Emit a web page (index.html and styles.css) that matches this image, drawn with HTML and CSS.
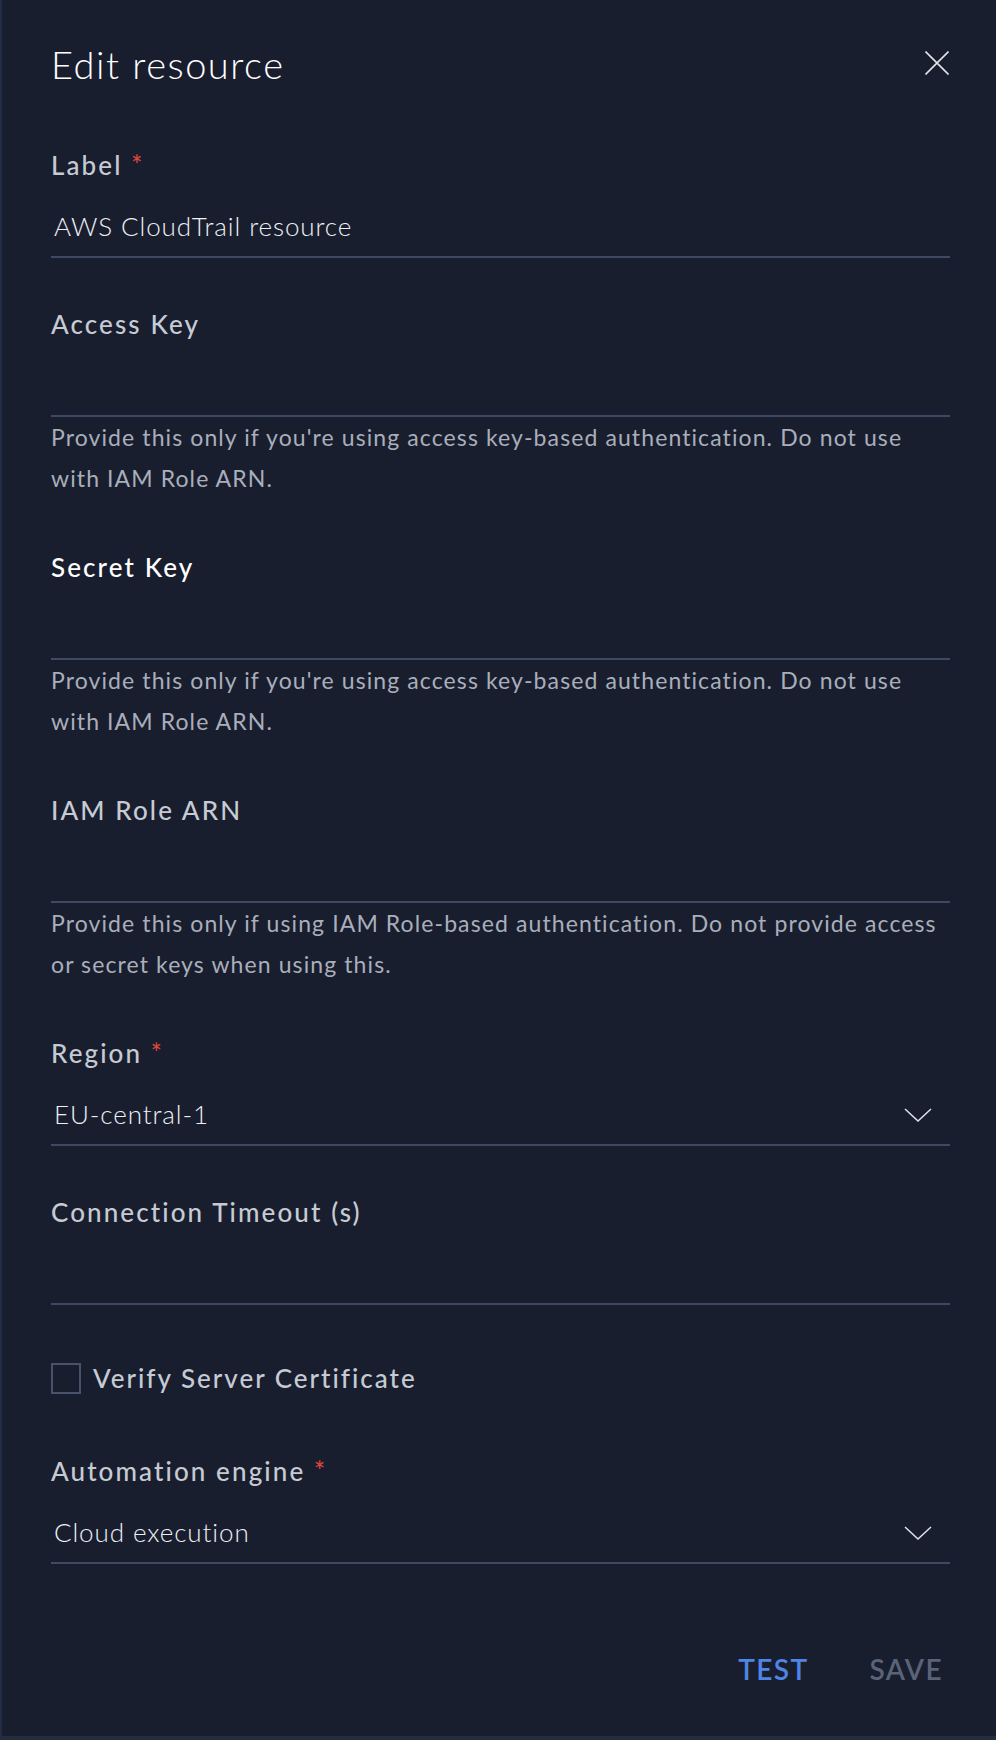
FILE: index.html
```html
<!DOCTYPE html>
<html lang="en">
<head>
<meta charset="utf-8">
<title>Edit resource</title>
<link rel="stylesheet" href="styles.css">
</head>
<body>
<div class="panel">
  <div class="header">
    <h1 class="title">Edit resource</h1>
    <button class="close" aria-label="Close">
      <svg width="24" height="24" viewBox="0 0 24 24"><path d="M0.5 0.5 L23.5 23.5 M23.5 0.5 L0.5 23.5" stroke="#dfe3ea" stroke-width="1.6" fill="none"/></svg>
    </button>
  </div>

  <div class="field first">
    <div class="label">Label <span class="req">*</span></div>
    <div class="input"><span class="value">AWS CloudTrail resource</span></div>
  </div>

  <div class="field">
    <div class="label">Access Key</div>
    <div class="input"></div>
    <div class="help">Provide this only if you're using access key-based authentication. Do not use with IAM Role ARN.</div>
  </div>

  <div class="field">
    <div class="label active">Secret Key</div>
    <div class="input"></div>
    <div class="help">Provide this only if you're using access key-based authentication. Do not use with IAM Role ARN.</div>
  </div>

  <div class="field">
    <div class="label">IAM Role ARN</div>
    <div class="input"></div>
    <div class="help">Provide this only if using IAM Role-based authentication. Do not provide access or secret keys when using this.</div>
  </div>

  <div class="field">
    <div class="label">Region <span class="req">*</span></div>
    <div class="input select"><span class="value">EU-central-1</span>
      <svg class="chev" width="28" height="14" viewBox="0 0 28 14"><path d="M1 1 L14 13 L27 1" stroke="#dfe3ea" stroke-width="1.5" fill="none"/></svg>
    </div>
  </div>

  <div class="field">
    <div class="label">Connection Timeout (s)</div>
    <div class="input"></div>
  </div>

  <div class="check-row">
    <span class="checkbox"></span>
    <span class="check-label">Verify Server Certificate</span>
  </div>

  <div class="field engine">
    <div class="label">Automation engine <span class="req">*</span></div>
    <div class="input select"><span class="value">Cloud execution</span>
      <svg class="chev" width="28" height="14" viewBox="0 0 28 14"><path d="M1 1 L14 13 L27 1" stroke="#dfe3ea" stroke-width="1.5" fill="none"/></svg>
    </div>
  </div>

  <div class="actions">
    <button class="btn test">TEST</button>
    <button class="btn save">SAVE</button>
  </div>
</div>
</body>
</html>
```
FILE: styles.css
```css
* { box-sizing: border-box; }
html, body { margin: 0; padding: 0; }
body {
  background: #181e2e;
  font-family: Lato, "Open Sans", sans-serif;
  color: #c6cbd3;
}
.panel {
  height: 1740px;
  border-left: 2px solid #222c44;
  border-bottom: 4px solid #252c3e;
  padding: 41px 46px 0 49px;
  background: #191e2f;
}
.header {
  display: flex;
  justify-content: space-between;
  align-items: flex-start;
  height: 46px;
}
.title {
  margin: 0;
  font-size: 38px;
  line-height: 46px;
  font-weight: 300;
  color: #ffffff;
  letter-spacing: 1.5px;
}
.close {
  margin: 10px 1px 0 0;
  padding: 0;
  width: 24px;
  height: 24px;
  border: 0;
  background: none;
  display: block;
}
.close svg { display: block; }
.field { margin-top: 51px; }
.field.first { margin-top: 63px; }
.label {
  font-size: 26px;
  line-height: 31px;
  font-weight: 500;
  color: #c6cbd3;
  letter-spacing: 2.1px;
}
.label.active { color: #ffffff; }
.req { color: #d9473b; letter-spacing: 0; }
.input {
  height: 77px;
  padding: 30px 18px 14px 3px;
  border-bottom: 2px solid #3e4a63;
  display: flex;
  align-items: flex-start;
  justify-content: space-between;
}
.value {
  font-size: 26px;
  line-height: 31px;
  font-weight: 300;
  color: #eef0f4;
  letter-spacing: 0.9px;
}
.chev { margin-top: 9px; display: block; }
.help {
  font-size: 23px;
  line-height: 41px;
  color: #a9afba;
  padding-bottom: 2px;
  letter-spacing: 1.1px;
}
.check-row {
  margin-top: 58px;
  display: flex;
  align-items: flex-start;
  gap: 12px;
}
.checkbox {
  width: 30px;
  height: 31px;
  border: 2px solid #48536b;
  display: block;
}
.check-label {
  font-size: 26px;
  line-height: 31px;
  font-weight: 500;
  color: #c6cbd3;
  letter-spacing: 2px;
}
.field.engine { margin-top: 62px; }
.actions {
  margin-top: 88px;
  display: flex;
  justify-content: flex-end;
  gap: 61px;
  padding-right: 7px;
}
.btn {
  font-family: Lato, "Open Sans", sans-serif;
  font-size: 28px;
  line-height: 34px;
  font-weight: 600;
  background: none;
  border: 0;
  padding: 0;
  letter-spacing: 1.4px;
}
.btn.test { color: #4f86e6; }
.btn.save { color: #5a6478; }
```
